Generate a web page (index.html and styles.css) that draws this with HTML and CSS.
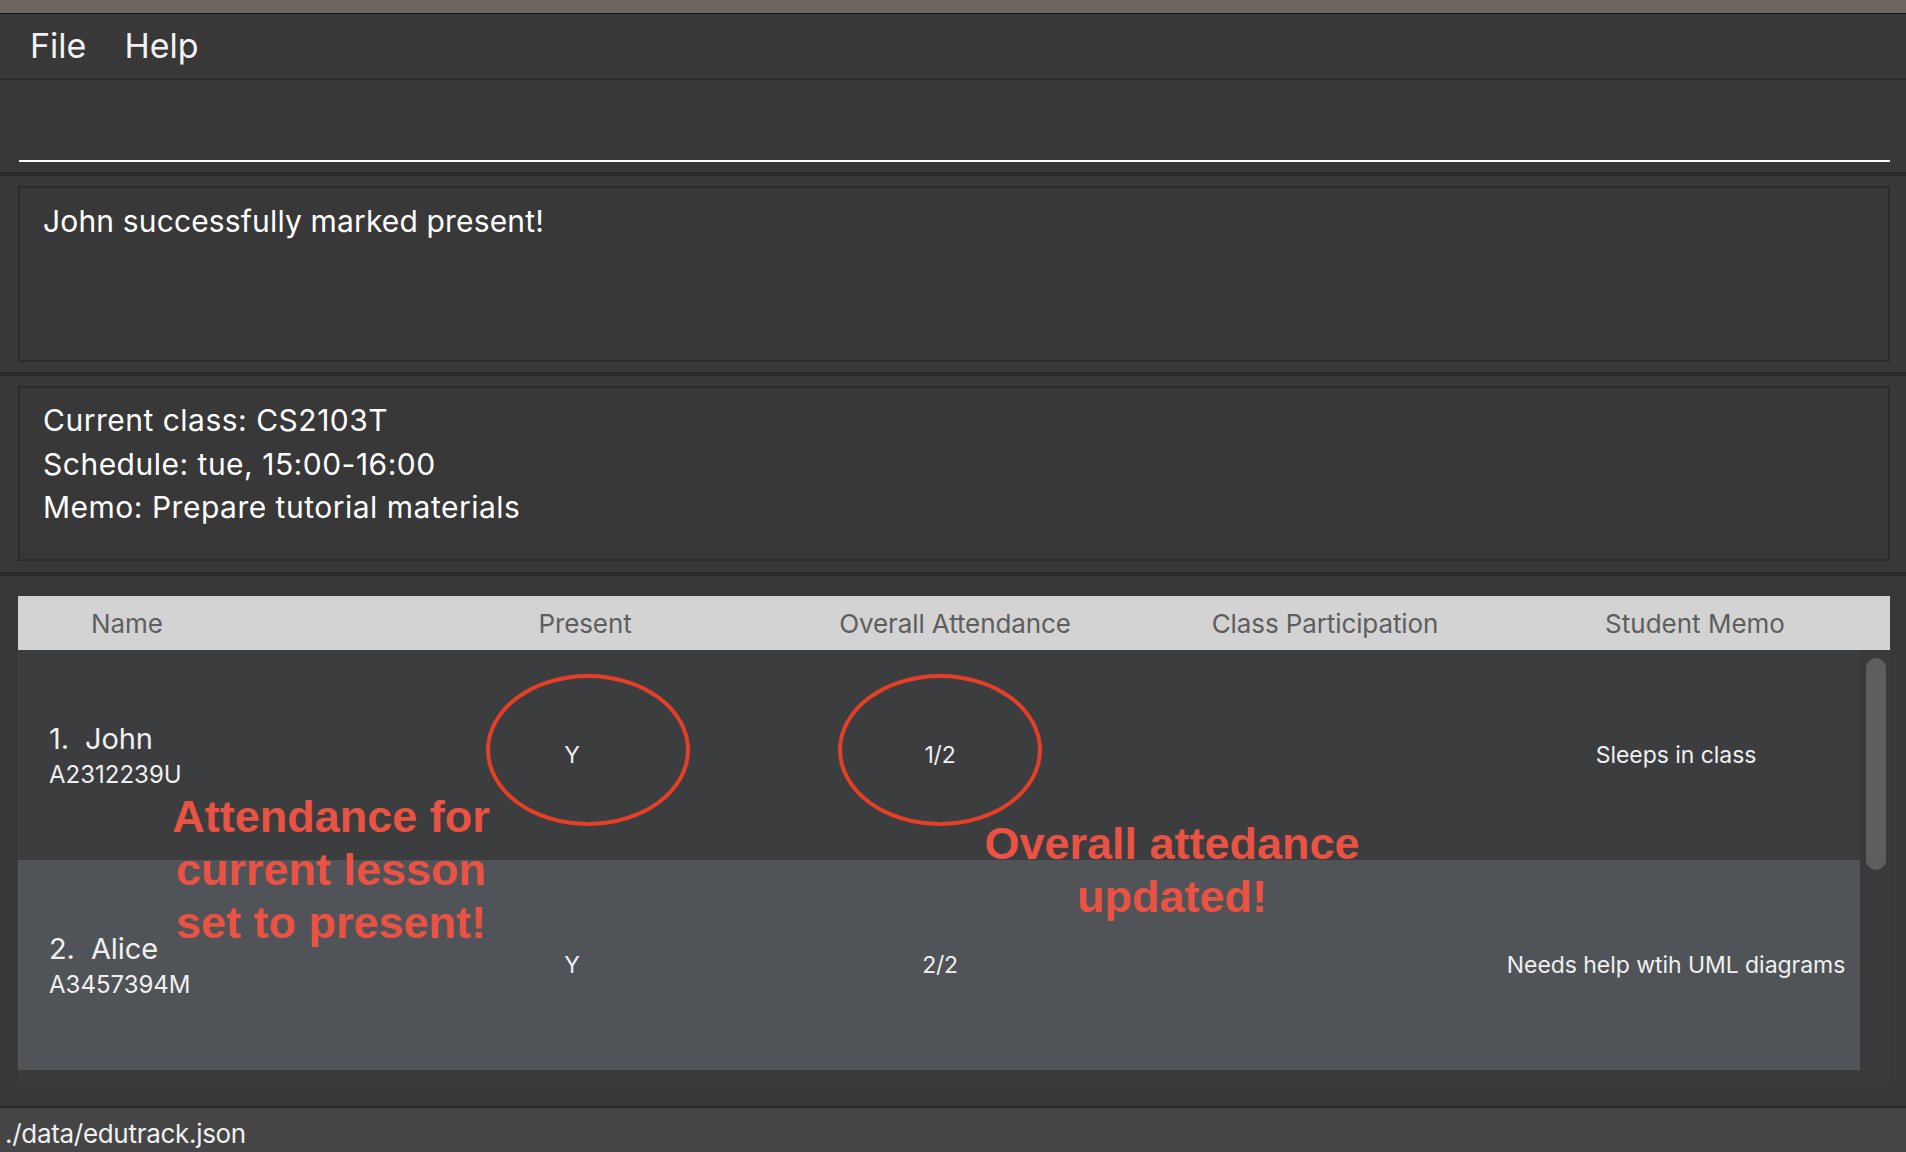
FILE: index.html
```html
<!DOCTYPE html>
<html lang="en">
<head>
<meta charset="utf-8">
<title>EduTrack</title>
<link rel="stylesheet" href="styles.css">
</head>
<body>
<div class="titlebar"></div>
<nav class="menubar"><span class="menu-item">File</span><span class="menu-item">Help</span></nav>
<div class="command"><div class="command-line"></div></div>
<section class="panel result-panel">
  <div class="box result-box">John successfully marked present!</div>
</section>
<section class="panel class-panel">
  <div class="box class-box">
    <p>Current class: CS2103T</p>
    <p>Schedule: tue, 15:00-16:00</p>
    <p>Memo: Prepare tutorial materials</p>
  </div>
</section>
<section class="table-panel">
  <div class="table">
    <div class="thead">
      <div class="th th-name">Name</div>
      <div class="th">Present</div>
      <div class="th">Overall Attendance</div>
      <div class="th">Class Participation</div>
      <div class="th th-memo">Student Memo</div>
      <div class="th"></div>
    </div>
    <div class="tbody-wrap">
      <div class="rows">
        <div class="row row-odd">
          <div class="cell-name"><div class="name">1.  John</div><div class="sid">A2312239U</div></div>
          <div class="cell">Y</div>
          <div class="cell">1/2</div>
          <div class="cell"></div>
          <div class="cell cell-memo">Sleeps in class</div>
        </div>
        <div class="row row-even">
          <div class="cell-name"><div class="name">2.  Alice</div><div class="sid">A3457394M</div></div>
          <div class="cell">Y</div>
          <div class="cell">2/2</div>
          <div class="cell"></div>
          <div class="cell cell-memo">Needs help wtih UML diagrams</div>
        </div>
        <div class="rows-rest"></div>
      </div>
      <div class="scrollbar"><div class="thumb"></div></div>
    </div>
    <div class="ring ring-present"></div>
    <div class="ring ring-overall"></div>
    <div class="note note-present">Attendance for<br>current lesson<br>set to present!</div>
    <div class="note note-overall">Overall attedance<br>updated!</div>
  </div>
</section>
<footer class="status">./data/edutrack.json</footer>
</body>
</html>
```

FILE: styles.css
```css
* { box-sizing: border-box; }
html, body { margin: 0; padding: 0; }
body {
  width: 1906px;
  height: 1152px;
  overflow: hidden;
  background: #383838;
  font-family: "Inter", "Liberation Sans", sans-serif;
  color: #ffffff;
  display: flex;
  flex-direction: column;
}
.titlebar {
  height: 14px;
  background: #6b6661;
  border-bottom: 1px solid #141414;
  flex: none;
}
.menubar {
  height: 66px;
  background: #383838;
  border-bottom: 2px solid #2b2b2b;
  display: flex;
  gap: 38px;
  padding-left: 30px;
  font-size: 34px;
  line-height: 64px;
  color: #f2f2f2;
  flex: none;
}
.command {
  height: 96px;
  background: #383838;
  border-bottom: 4px solid #2a2a2a;
  padding: 80px 16px 0 19px;
  flex: none;
}
.command-line {
  height: 2px;
  background: #ffffff;
}
.panel {
  padding: 10px 16px 10px 18px;
  background: #383838;
  border-bottom: 4px solid #2a2a2a;
  flex: none;
}
.class-panel { padding-bottom: 11px; }
.box {
  border: 2px solid #2b2b2b;
  background: #383838;
  padding-left: 23px;
}
.result-box {
  height: 176px;
  padding-top: 15px;
  font-size: 30px;
  line-height: 36px;
  letter-spacing: 0.15px;
}
.class-box {
  height: 175px;
  padding-top: 11px;
  font-size: 30px;
  line-height: 43.5px;
  letter-spacing: 0.5px;
}
.class-box p { margin: 0; }
.table-panel {
  height: 530px;
  padding: 20px 16px 20px 18px;
  background: #383838;
  flex: none;
}
.table {
  position: relative;
  width: 1872px;
}
.thead {
  height: 54px;
  background: #d3d3d3;
  display: grid;
  grid-template-columns: 382px repeat(4, 370px) 1fr;
  align-items: center;
  color: #5e5e5e;
  font-size: 26px;
  letter-spacing: -0.1px;
}
.th { text-align: center; }
.th-name { text-align: left; padding-left: 73px; }
.th-memo { letter-spacing: 0; }
.tbody-wrap {
  display: flex;
  height: 436px;
}
.rows {
  width: 1842px;
  display: flex;
  flex-direction: column;
}
.row {
  height: 210px;
  display: grid;
  grid-template-columns: 370px repeat(4, 368px);
  align-items: center;
  color: #f0f0f0;
}
.row-odd { background: #3c3d3f; }
.row-even { background: #505458; }
.rows-rest { height: 16px; background: #3a3a3b; }
.cell-name { padding-left: 31px; }
.name {
  font-size: 29px;
  line-height: 36px;
  white-space: pre;
  letter-spacing: -0.1px;
}
.sid {
  margin-top: 3px;
  font-size: 24px;
  line-height: 30px;
  letter-spacing: 0;
}
.cell {
  text-align: center;
  font-size: 23px;
  letter-spacing: -0.2px;
}
.cell-memo { font-size: 23px; letter-spacing: -0.05px; }
.scrollbar {
  width: 30px;
  height: 436px;
  background: #3a3a3a;
  padding: 8px 4px 0 6px;
}
.thumb {
  height: 212px;
  border-radius: 10px;
  background: #5e5e5e;
}
.ring {
  position: absolute;
  top: 78px;
  width: 204px;
  height: 152px;
  border: 4px solid #e43f27;
  border-radius: 50%;
}
.ring-present { left: 468px; }
.ring-overall { left: 820px; }
.note {
  position: absolute;
  font-family: "Liberation Sans", Arial, sans-serif;
  font-weight: bold;
  font-size: 45px;
  line-height: 53px;
  color: #ea5343;
  text-align: center;
}
.note-present { left: 131px; top: 194px; width: 364px; }
.note-overall { left: 942px; top: 221px; width: 424px; }
.status {
  height: 46px;
  border-top: 2px solid #2b2b2b;
  background: #454545;
  padding: 6px 0 0 5px;
  font-size: 26px;
  line-height: 40px;
  color: #f0f0f0;
  letter-spacing: -0.3px;
  flex: none;
}
```
